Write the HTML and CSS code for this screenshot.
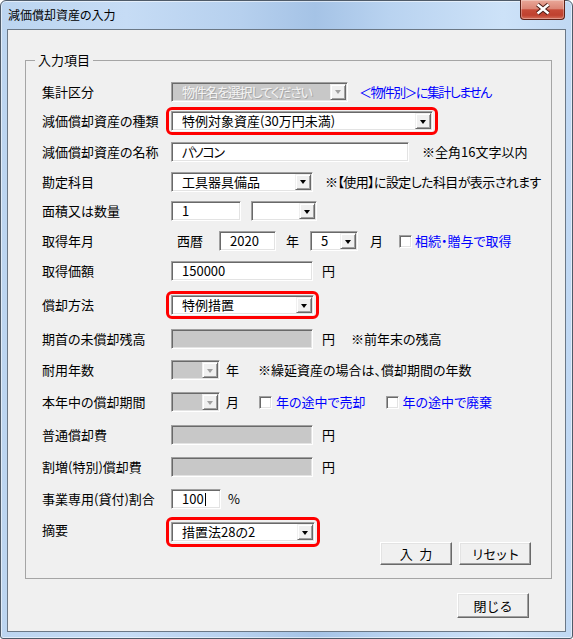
FILE: index.html
```html
<!DOCTYPE html>
<html lang="ja">
<head>
    <meta charset="UTF-8">
    <title>減価償却資産の入力</title>
    <link rel="stylesheet" href="styles.css">
</head>
<body>
    <div class="window">
        <div class="titlebar">
            <span class="title">減価償却資産の入力</span>
            <button class="close-x" title="閉じる">
                <svg width="45" height="20" viewBox="0 0 45 20">
                    <path d="M17.5 5.5 L28.5 14.5 M28.5 5.5 L17.5 14.5" stroke="#4a1d17" stroke-width="4.4" fill="none"/>
                    <path d="M17.5 5.5 L28.5 14.5 M28.5 5.5 L17.5 14.5" stroke="#fff" stroke-width="2.4" fill="none"/>
                </svg>
            </button>
        </div>

        <div class="client">
            <fieldset class="group">
                <legend>入力項目</legend>
                <div class="form">
                    <div class="row">
                        <span class="label">集計区分</span>
                        <div class="combo disabled w-kubun"><span class="value narrow">物件名を選択してください</span><span class="drop"></span></div>
                        <span class="link gap-11 narrower">＜物件別＞に集計しません</span>
                    </div>

                    <div class="row">
                        <span class="label">減価償却資産の種類</span>
                        <div class="mark">
                            <div class="combo w-shurui"><span class="value">特例対象資産(30万円未満)</span><span class="drop"></span></div>
                        </div>
                    </div>

                    <div class="row">
                        <span class="label">減価償却資産の名称</span>
                        <div class="field w-name"><span class="narrow">パソコン</span></div>
                        <span class="note gap-13">※全角16文字以内</span>
                    </div>

                    <div class="row">
                        <span class="label">勘定科目</span>
                        <div class="combo w-142"><span class="value">工具器具備品</span><span class="drop"></span></div>
                        <span class="note gap-12 tight">※【使用】に設定した科目が表示されます</span>
                    </div>

                    <div class="row">
                        <span class="label">面積又は数量</span>
                        <div class="field w-70">1</div>
                        <div class="combo w-66 gap-10"><span class="value"></span><span class="drop"></span></div>
                    </div>

                    <div class="row">
                        <span class="label">取得年月</span>
                        <span class="unit gap-6">西暦</span>
                        <div class="field w-57 gap-16">2020</div>
                        <span class="unit gap-10">年</span>
                        <div class="combo w-48 gap-11"><span class="value">5</span><span class="drop"></span></div>
                        <span class="unit gap-12">月</span>
                        <span class="check gap-16"></span>
                        <span class="link gap-3">相続・贈与で取得</span>
                    </div>

                    <div class="row">
                        <span class="label">取得価額</span>
                        <div class="field w-142">150000</div>
                        <span class="unit gap-9">円</span>
                    </div>

                    <div class="row">
                        <span class="label">償却方法</span>
                        <div class="mark">
                            <div class="combo w-143"><span class="value">特例措置</span><span class="drop"></span></div>
                        </div>
                    </div>

                    <div class="row">
                        <span class="label">期首の未償却残高</span>
                        <div class="field gray w-142"></div>
                        <span class="unit gap-9">円</span>
                        <span class="note gap-16">※前年末の残高</span>
                    </div>

                    <div class="row">
                        <span class="label">耐用年数</span>
                        <div class="combo disabled w-49"><span class="value"></span><span class="drop"></span></div>
                        <span class="unit gap-6">年</span>
                        <span class="note gap-19">※繰延資産の場合は、償却期間の年数</span>
                    </div>

                    <div class="row">
                        <span class="label">本年中の償却期間</span>
                        <div class="combo disabled w-49"><span class="value"></span><span class="drop"></span></div>
                        <span class="unit gap-6">月</span>
                        <span class="check gap-20"></span>
                        <span class="link gap-4">年の途中で売却</span>
                        <span class="check gap-20"></span>
                        <span class="link gap-4">年の途中で廃棄</span>
                    </div>

                    <div class="row">
                        <span class="label">普通償却費</span>
                        <div class="field gray w-142"></div>
                        <span class="unit gap-9">円</span>
                    </div>

                    <div class="row">
                        <span class="label">割増(特別)償却費</span>
                        <div class="field gray w-142"></div>
                        <span class="unit gap-9">円</span>
                    </div>

                    <div class="row">
                        <span class="label">事業専用(貸付)割合</span>
                        <div class="field w-50">100<span class="caret"></span></div>
                        <span class="unit gap-7">%</span>
                    </div>

                    <div class="row last">
                        <span class="label">摘要</span>
                        <div class="mark tall">
                            <div class="combo w-144"><span class="value">措置法28の2</span><span class="drop"></span></div>
                        </div>
                        <div class="actions">
                            <button class="btn">入&ensp;力</button>
                            <button class="btn"><span class="narrow">リセット</span></button>
                        </div>
                    </div>
                </div>
            </fieldset>

            <div class="footer">
                <button class="btn big">閉じる</button>
            </div>
        </div>
    </div>
</body>
</html>
```

FILE: styles.css
```css
* {
    box-sizing: border-box;
}

body {
    margin: 0;
    background: #fff;
    font-family: "Noto Sans CJK JP", "Noto Sans", sans-serif;
    font-size: 13px;
    font-feature-settings: "palt";
    color: #000;
}

/* window frame */
.window {
    width: 573px;
    height: 639px;
    border: 1px solid #4f5b69;
    border-radius: 6px 6px 3px 3px;
    padding: 0 6px 6px;
    display: flex;
    flex-direction: column;
    background: linear-gradient(to right, #bcd5f0 0%, #c6dcf5 22%, #b6d0ee 42%, #a5c3e6 55%, #b9d3f0 68%, #cde2f8 88%, #c0d8f3 100%);
    box-shadow: inset 0 0 0 1px rgba(255, 255, 255, 0.55);
}

.titlebar {
    height: 28px;
    display: flex;
    justify-content: space-between;
    align-items: flex-start;
}

.title {
    font-size: 12px;
    line-height: 16px;
    padding: 6px 0 0 1px;
}

.close-x {
    width: 45px;
    height: 20px;
    margin: -1px 1px 0 0;
    padding: 0;
    border: 1px solid #5d2117;
    border-top: none;
    border-radius: 0 0 4px 4px;
    background: linear-gradient(#e9a899 0%, #dc8676 45%, #c64b38 52%, #bf412f 80%, #d4705c 100%);
    box-shadow: inset 0 0 0 1px rgba(255, 255, 255, 0.3);
    display: block;
}

.close-x svg {
    display: block;
    margin: -1px 0 0 -1px;
}

.client {
    flex: 1;
    border: 1px solid #6b7886;
    background: #f0f0f0;
    display: flex;
    flex-direction: column;
}

/* group box */
.group {
    margin: 22px 13px 0 17px;
    padding: 9px 20px 13px 16px;
    border: 1px solid #a5a5a5;
    min-width: 0;
}

.group legend {
    padding: 0 3px;
    margin-left: -7px;
    line-height: 16px;
}

.form {
    display: grid;
    grid-template-columns: minmax(0, 1fr);
    grid-template-rows: 29px 30px 31px 29px 30px 30px 30px 38px 30px 32px 32px 34px 30px 34px 49px;
}

.row {
    display: flex;
    align-items: center;
    white-space: nowrap;
    min-width: 0;
}

.label {
    width: 129px;
    flex: none;
    line-height: 16px;
}

.unit, .note, .link {
    line-height: 16px;
}

.link {
    color: #0000ff;
}

.tight {
    letter-spacing: -0.6px;
}

.narrow {
    letter-spacing: -1.3px;
}

.narrower {
    letter-spacing: -1.6px;
}

/* sunken text box */
.field {
    height: 20px;
    flex: none;
    padding-left: 10px;
    line-height: 18px;
    background: #fff;
    border: 1px solid;
    border-color: #a0a0a0 #fff #fff #a0a0a0;
    box-shadow: inset 1px 1px 0 #696969, inset -1px -1px 0 #e3e3e3;
}

.field.gray {
    background: #c8c8c8;
}

.caret {
    display: inline-block;
    width: 1px;
    height: 13px;
    margin-left: 1px;
    background: #000;
    vertical-align: -2px;
}

/* drop-down list */
.combo {
    height: 20px;
    flex: none;
    display: flex;
    padding: 1px;
    background: #fff;
    border: 1px solid;
    border-color: #a0a0a0 #fff #fff #a0a0a0;
    box-shadow: inset 1px 1px 0 #696969, inset -1px -1px 0 #e3e3e3;
}

.combo .value {
    flex: 1;
    padding-left: 9px;
    line-height: 16px;
}

.combo .drop {
    width: 16px;
    flex: none;
    display: flex;
    align-items: center;
    justify-content: center;
    background: #f0f0f0;
    border: 1px solid;
    border-color: #f0f0f0 #696969 #696969 #f0f0f0;
    box-shadow: inset 1px 1px 0 #fff, inset -1px -1px 0 #a0a0a0;
}

.combo .drop::after {
    content: "";
    border-left: 3.5px solid transparent;
    border-right: 3.5px solid transparent;
    border-top: 4px solid #000;
    margin-top: 1px;
}

.combo.disabled {
    background: #c8c8c8;
}

.combo.disabled .value {
    color: #f4f4f4;
    text-shadow: 1px 1px 0 #a6a6a6;
}

.combo.disabled .drop::after {
    border-top-color: #a0a0a0;
}

.check {
    width: 13px;
    height: 13px;
    flex: none;
    background: #fff;
    border: 1px solid;
    border-color: #a0a0a0 #fff #fff #a0a0a0;
    box-shadow: inset 1px 1px 0 #696969, inset -1px -1px 0 #e3e3e3;
}

/* red highlight */
.mark {
    margin-left: -5px;
    padding: 1px 2px;
    border: 3px solid #ff0000;
    border-radius: 6px;
}

.mark.tall {
    padding: 2px;
}

.row.last {
    align-items: flex-start;
}

.row.last .label {
    height: 28px;
    display: flex;
    align-items: center;
}

.row.last .mark {
    margin-top: 1px;
}

.actions {
    margin-left: auto;
    align-self: flex-end;
    display: flex;
    gap: 7px;
}

.btn {
    width: 72px;
    height: 23px;
    padding: 0;
    font-family: inherit;
    font-size: 13px;
    line-height: 16px;
    color: #000;
    background: #f0f0f0;
    border: 1px solid;
    border-color: #fff #696969 #696969 #fff;
    box-shadow: inset -1px -1px 0 #a0a0a0, inset 1px 1px 0 #e3e3e3;
}

.btn.big {
    height: 25px;
}

.footer {
    display: flex;
    justify-content: flex-end;
    padding: 14px 36px 0 0;
}

/* widths and gaps */
.w-kubun { width: 177px; }
.w-shurui { width: 262px; }
.w-name { width: 238px; }
.w-142 { width: 142px; }
.w-143 { width: 143px; }
.w-144 { width: 144px; }
.w-70 { width: 70px; }
.w-66 { width: 66px; }
.w-57 { width: 57px; }
.w-50 { width: 50px; }
.w-49 { width: 49px; }
.w-48 { width: 48px; }

.gap-3 { margin-left: 3px; }
.gap-4 { margin-left: 4px; }
.gap-6 { margin-left: 6px; }
.gap-7 { margin-left: 7px; }
.gap-9 { margin-left: 9px; }
.gap-10 { margin-left: 10px; }
.gap-11 { margin-left: 11px; }
.gap-12 { margin-left: 12px; }
.gap-13 { margin-left: 13px; }
.gap-16 { margin-left: 16px; }
.gap-19 { margin-left: 19px; }
.gap-20 { margin-left: 20px; }
```
